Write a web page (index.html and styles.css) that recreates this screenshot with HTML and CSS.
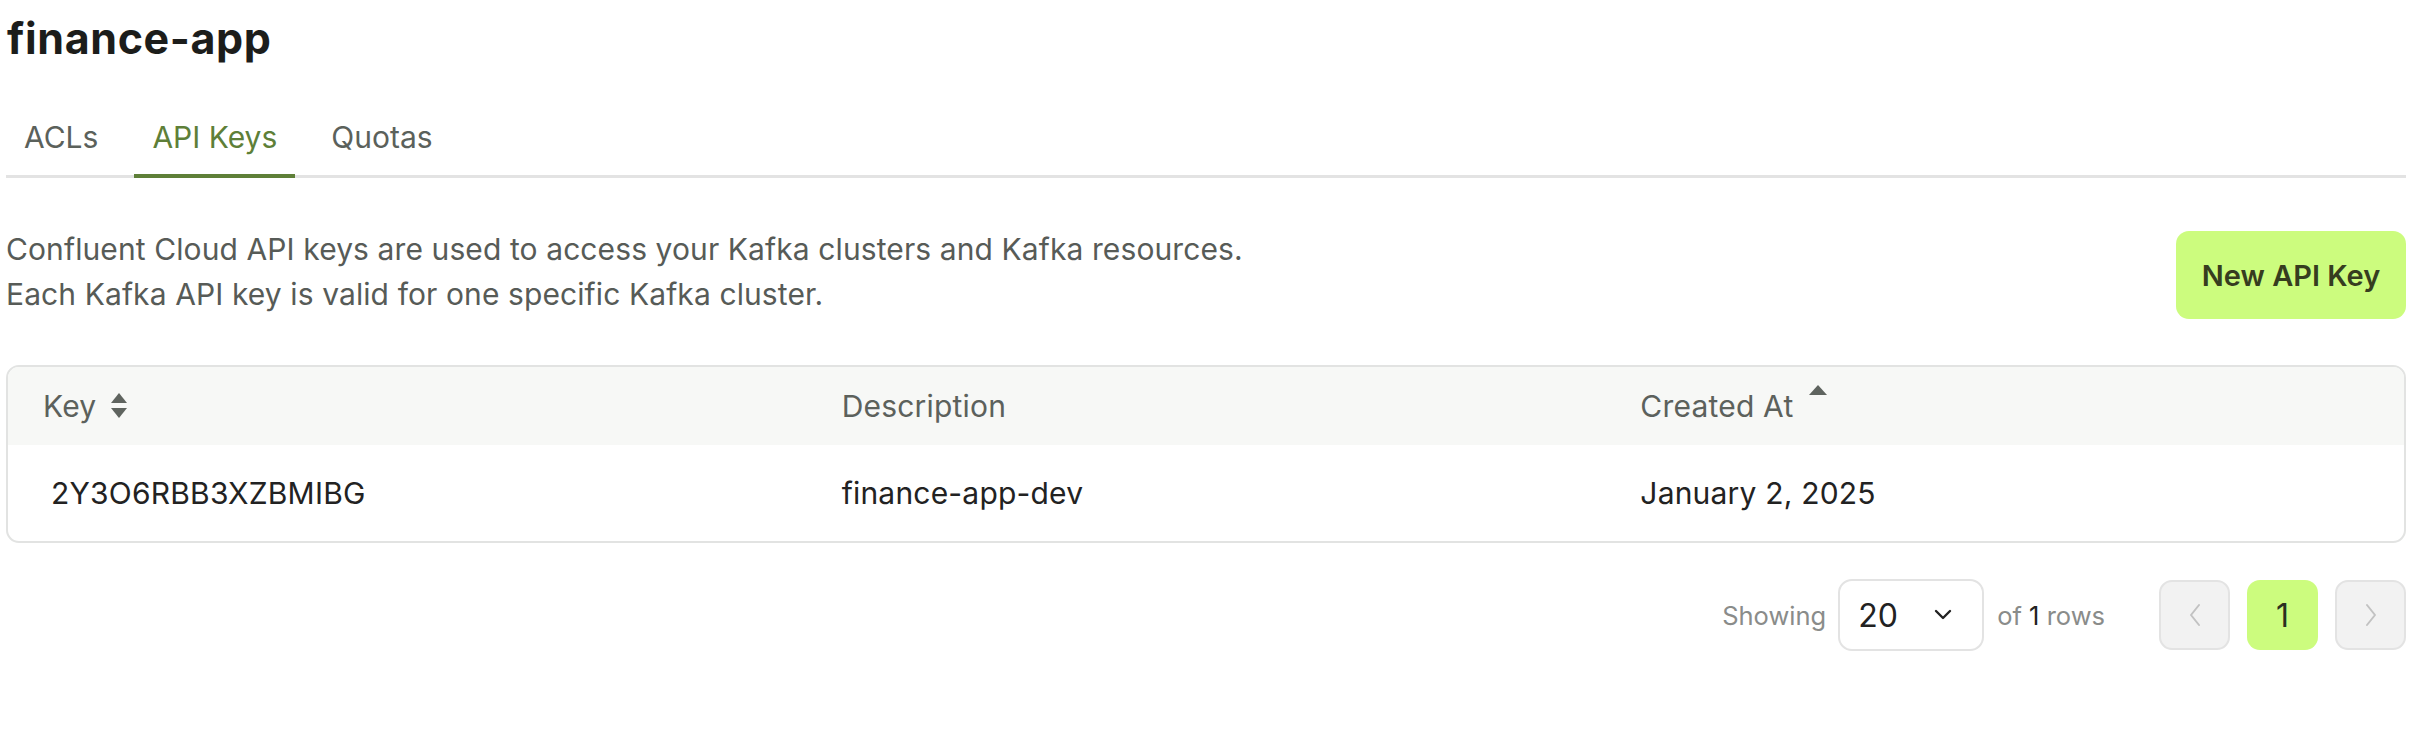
FILE: index.html
```html
<!DOCTYPE html>
<html lang="en">
<head>
<meta charset="utf-8">
<title>finance-app</title>
<link rel="stylesheet" href="styles.css">
</head>
<body>
<div class="page">
  <h1 class="title">finance-app</h1>
  <nav class="tabs">
    <a class="tab">ACLs</a>
    <a class="tab active">API Keys</a>
    <a class="tab">Quotas</a>
  </nav>
  <section class="intro">
    <p class="intro-text">Confluent Cloud API keys are used to access your Kafka clusters and Kafka resources.<br>Each Kafka API key is valid for one specific Kafka cluster.</p>
    <button class="btn-primary">New API Key</button>
  </section>
  <div class="table">
    <div class="thead">
      <div class="th">Key
        <svg class="sort-both" width="18" height="28" viewBox="0 0 18 28"><path d="M9 1 L17 11 L1 11 Z" fill="#5f645f"/><path d="M1 16 L17 16 L9 26 Z" fill="#5f645f"/></svg>
      </div>
      <div class="th">Description</div>
      <div class="th">Created At
        <svg class="sort-up" width="22" height="12" viewBox="0 0 22 12"><path d="M11 1 L20 11 L2 11 Z" fill="#5f645f"/></svg>
      </div>
    </div>
    <div class="tr">
      <div class="td"><span class="key">2Y3O6RBB3XZBMIBG</span></div>
      <div class="td">finance-app-dev</div>
      <div class="td">January 2, 2025</div>
    </div>
  </div>
  <div class="pager">
    <span class="muted">Showing</span>
    <div class="select"><span>20</span>
      <svg width="18" height="12" viewBox="0 0 18 12"><path d="M2 2 L9 9 L16 2" fill="none" stroke="#222" stroke-width="2.4" stroke-linecap="round" stroke-linejoin="round"/></svg>
    </div>
    <span class="muted">of <b class="count">1</b> rows</span>
    <div class="pages">
      <button class="pg pg-nav"><svg width="14" height="24" viewBox="0 0 14 24"><path d="M11 2 L3 12 L11 22" fill="none" stroke="#c2c2c2" stroke-width="2" stroke-linecap="round" stroke-linejoin="round"/></svg></button>
      <button class="pg pg-current">1</button>
      <button class="pg pg-nav"><svg width="14" height="24" viewBox="0 0 14 24"><path d="M3 2 L11 12 L3 22" fill="none" stroke="#c2c2c2" stroke-width="2" stroke-linecap="round" stroke-linejoin="round"/></svg></button>
    </div>
  </div>
</div>
</body>
</html>
```

FILE: styles.css
```css
* { box-sizing: border-box; }
html, body { margin: 0; padding: 0; background: #fff; }
body { font-family: Inter, "Noto Sans", "Liberation Sans", sans-serif; color: #222; }

.page { padding: 0 4px 0 6px; }

.title {
  margin: 0;
  padding-top: 13px;
  font-size: 43px;
  line-height: 50px;
  font-weight: 700;
  color: #1c1d1b;
  letter-spacing: 0.6px;
  padding-left: 1px;
}

.tabs {
  display: flex;
  gap: 18px;
  margin-top: 56px;
  border-bottom: 3px solid #e3e3e3;
}
.tab {
  display: block;
  padding: 0 18px 19px;
  font-size: 30px;
  line-height: 36px;
  color: #5b615b;
  border-bottom: 4px solid transparent;
  margin-bottom: -3px;
}
.tab.active { color: #5e7f38; border-bottom-color: #5e7f38; }

.intro {
  display: flex;
  justify-content: space-between;
  align-items: flex-start;
  padding-top: 49px;
}
.intro-text {
  margin: 0;
  font-size: 30px;
  line-height: 45px;
  color: #575b57;
  letter-spacing: 0.1px;
}
.btn-primary {
  margin-top: 4px;
  width: 230px;
  height: 88px;
  border: none;
  border-radius: 13px;
  background: #ccfc7e;
  color: #363d1f;
  font-family: inherit;
  font-size: 29px;
  font-weight: 600;
}

.table {
  margin-top: 46px;
  border: 2px solid #e2e3e2;
  border-radius: 13px;
  overflow: hidden;
}
.thead, .tr {
  display: grid;
  grid-template-columns: 1fr 1fr 1fr;
}
.thead { background: #f7f8f6; height: 78px; align-items: center; }
.tr { height: 96px; align-items: center; }
.th, .td { padding-left: 35px; font-size: 30px; letter-spacing: 0.2px; }
.th { color: #5c615c; display: flex; align-items: center; gap: 14px; }
.td { color: #222; }
.key { padding-left: 8px; }
.sort-up { align-self: flex-start; margin-top: -4px; }

.pager {
  display: flex;
  justify-content: flex-end;
  align-items: center;
  margin-top: 36px;
  font-size: 25.5px;
}
.muted { color: #8a8c8a; }
.count { font-weight: 400; color: #222; }
.select {
  margin: 0 13px 0 12px;
  width: 146px;
  height: 72px;
  border: 2px solid #e3e3e3;
  border-radius: 14px;
  display: flex;
  align-items: center;
  justify-content: space-between;
  padding: 0 30px 0 18px;
  font-size: 32px;
  color: #222;
}
.pages { display: flex; gap: 17px; margin-left: 54px; }
.pg {
  width: 71px;
  height: 70px;
  border-radius: 13px;
  display: flex;
  align-items: center;
  justify-content: center;
  font-family: inherit;
  padding: 0;
}
.pg-nav { background: #f2f2f2; border: 2px solid #e3e3e3; }
.pg-current { background: #ccfc7e; border: none; font-size: 32px; color: #2b2f20; }
```
